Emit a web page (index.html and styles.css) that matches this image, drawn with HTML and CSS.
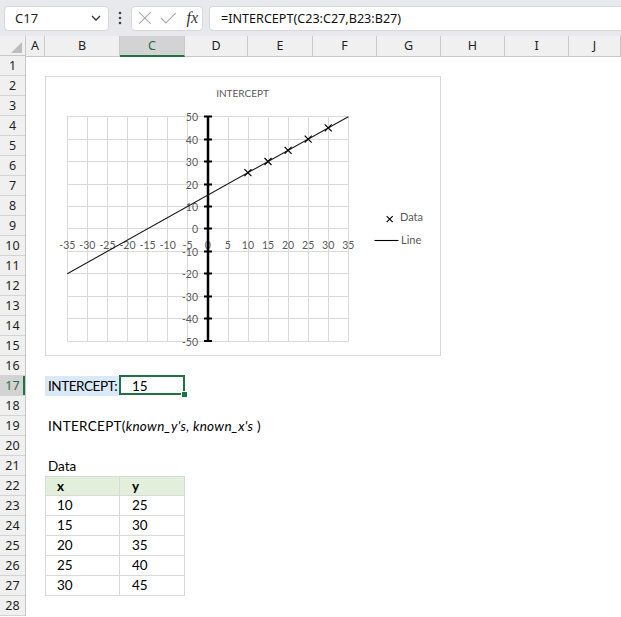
FILE: index.html
```html
<!DOCTYPE html>
<html>
<head>
<meta charset="utf-8">
<link rel="stylesheet" href="styles.css">
</head>
<body>
<div class="topbar">
  <div class="namebox">
    <span>C17</span>
    <svg class="chev" width="10" height="6" viewBox="0 0 10 6"><polyline points="1,1 5,5 9,1" fill="none" stroke="#333" stroke-width="1.3"/></svg>
  </div>
  <div class="dots">
    <svg width="4" height="14" viewBox="0 0 4 14"><circle cx="2" cy="2" r="1.3" fill="#444"/><circle cx="2" cy="7" r="1.3" fill="#444"/><circle cx="2" cy="12" r="1.3" fill="#444"/></svg>
  </div>
  <div class="fxbox">
    <svg width="14" height="14" viewBox="0 0 14 14"><path d="M1 1 L13 13 M13 1 L1 13" stroke="#a8a8a8" stroke-width="1.1" fill="none"/></svg>
    <svg width="17" height="12" viewBox="0 0 17 12"><polyline points="1,6 6,11 16,1" stroke="#a8a8a8" stroke-width="1.1" fill="none"/></svg>
    <span class="fx">fx</span>
  </div>
  <div class="formula">=INTERCEPT(C23:C27,B23:B27)</div>
</div>

<div class="sheet">
  <div class="corner">
    <svg width="26" height="20" viewBox="0 0 26 20"><polygon points="22,6 22,17 11,17" fill="#bdbdbd"/></svg>
  </div>
  <div class="colheads">
    <div class="ch">A</div>
    <div class="ch">B</div>
    <div class="ch sel">C</div>
    <div class="ch">D</div>
    <div class="ch">E</div>
    <div class="ch">F</div>
    <div class="ch">G</div>
    <div class="ch">H</div>
    <div class="ch">I</div>
    <div class="ch">J</div>
  </div>
  <div class="rowheads">
    <div class="rh">1</div><div class="rh">2</div><div class="rh">3</div><div class="rh">4</div>
    <div class="rh">5</div><div class="rh">6</div><div class="rh">7</div><div class="rh">8</div>
    <div class="rh">9</div><div class="rh">10</div><div class="rh">11</div><div class="rh">12</div>
    <div class="rh">13</div><div class="rh">14</div><div class="rh">15</div><div class="rh">16</div>
    <div class="rh sel">17</div><div class="rh">18</div><div class="rh">19</div><div class="rh">20</div>
    <div class="rh">21</div><div class="rh">22</div><div class="rh">23</div><div class="rh">24</div>
    <div class="rh">25</div><div class="rh">26</div><div class="rh">27</div><div class="rh">28</div>
  </div>
  <div class="cells">
    <div class="chart">
      <svg width="396" height="280" viewBox="45 76 396 280">
        <rect x="45.5" y="76.5" width="395" height="279" fill="#fff" stroke="#d9d9d9"/>
        <text class="title" x="242.5" y="97" text-anchor="middle">INTERCEPT</text>
        <path d="M67.5 116V342M87.5 116V342M107.5 116V342M127.5 116V342M147.5 116V342M167.5 116V342M187.5 116V342M228.5 116V342M248.5 116V342M268.5 116V342M288.5 116V342M308.5 116V342M328.5 116V342M348.5 116V342M67 116.5H349M67 139.5H349M67 161.5H349M67 184.5H349M67 206.5H349M67 228.5H349M67 251.5H349M67 273.5H349M67 296.5H349M67 318.5H349M67 341.5H349" stroke="#d9d9d9" stroke-width="1" fill="none"/>
        <g class="xl" text-anchor="middle">
          <text x="67.3" y="249">-35</text><text x="87.4" y="249">-30</text><text x="107.5" y="249">-25</text>
          <text x="127.5" y="249">-20</text><text x="147.6" y="249">-15</text><text x="167.7" y="249">-10</text>
          <text x="187.7" y="249">-5</text><text x="207.8" y="249">0</text><text x="227.9" y="249">5</text>
          <text x="247.9" y="249">10</text><text x="268" y="249">15</text><text x="288.1" y="249">20</text>
          <text x="308.2" y="249">25</text><text x="328.2" y="249">30</text><text x="348.3" y="249">35</text>
        </g>
        <g class="xl" text-anchor="end">
          <text x="198" y="120.5">50</text><text x="198" y="143.5">40</text><text x="198" y="165.5">30</text>
          <text x="198" y="188.5">20</text><text x="198" y="210.5">10</text><text x="198" y="232.5">0</text>
          <text x="198" y="256">-10</text><text x="198" y="277.5">-20</text><text x="198" y="300.5">-30</text>
          <text x="198" y="322.5">-40</text><text x="198" y="345.5">-50</text>
        </g>
        <path d="M208 116V342" stroke="#000" stroke-width="2.5"/>
        <path d="M204 116.5H212M204 139.5H212M204 161.5H212M204 184.5H212M204 206.5H212M204 228.5H212M204 251.5H212M204 273.5H212M204 296.5H212M204 318.5H212M204 341H212" stroke="#000" stroke-width="2"/>
        <path d="M67.3 273.7L348.3 116.65" stroke="#1a1a1a" stroke-width="1.1" fill="none"/>
        <path d="M244.4 169.2l7 7m0 -7l-7 7M264.5 158l7 7m0 -7l-7 7M284.6 146.8l7 7m0 -7l-7 7M304.7 135.6l7 7m0 -7l-7 7M324.7 124.4l7 7m0 -7l-7 7" stroke="#000" stroke-width="1.2" fill="none"/>
        <path d="M386.7 216.2l6 6m0 -6l-6 6" stroke="#000" stroke-width="1.2" fill="none"/>
        <text class="lg" x="400" y="221">Data</text>
        <path d="M374.5 240.5H398.5" stroke="#000" stroke-width="1.1"/>
        <text class="lg" x="401" y="244">Line</text>
      </svg>
    </div>
    <div class="c b17">INTERCEPT:</div>
    <div class="c c17">15</div>
    <div class="c b19">INTERCEPT(<i>known_y's, known_x's</i> )</div>
    <div class="c b21">Data</div>
    <div class="table">
      <div class="t th tb">x</div><div class="t th tc">y</div>
      <div class="t tb">10</div><div class="t tc">25</div>
      <div class="t tb">15</div><div class="t tc">30</div>
      <div class="t tb">20</div><div class="t tc">35</div>
      <div class="t tb">25</div><div class="t tc">40</div>
      <div class="t tb">30</div><div class="t tc">45</div>
    </div>
  </div>
</div>
</body>
</html>
```

FILE: styles.css
```css
* { box-sizing: border-box; margin: 0; padding: 0; }
body {
  width: 621px;
  height: 617px;
  overflow: hidden;
  background: #fff;
  font-family: "Noto Sans", "Open Sans", sans-serif;
  color: #222;
}
.topbar {
  height: 36px;
  background: #e7e9ec;
  display: flex;
  align-items: center;
  padding-left: 4px;
}
.namebox {
  width: 105px;
  height: 25px;
  background: #fff;
  border: 1px solid #d6d8dc;
  border-radius: 4px;
  display: flex;
  align-items: center;
  justify-content: space-between;
  padding: 0 7px 0 10px;
  font-size: 13px;
  color: #222;
}
.dots {
  width: 22px;
  display: flex;
  justify-content: center;
  align-items: center;
}
.dots svg { display: block; }
.fxbox {
  width: 72px;
  height: 25px;
  background: #fff;
  border: 1px solid #d6d8dc;
  border-radius: 4px;
  display: flex;
  align-items: center;
  padding: 0 4px 0 6px;
  gap: 8px;
}
.fxbox svg { display: block; }
.fx {
  font-family: "Liberation Serif", serif;
  font-style: italic;
  font-size: 16px;
  color: #333;
  margin-left: 2px;
}
.formula {
  flex: 1;
  height: 25px;
  margin-left: 6px;
  background: #fff;
  border: 1px solid #d6d8dc;
  border-right: none;
  border-radius: 4px 0 0 4px;
  padding-left: 11px;
  font-size: 12.6px;
  display: flex;
  align-items: center;
  color: #111;
}
.sheet {
  display: grid;
  grid-template-columns: 26px 1fr;
  grid-template-rows: 20px 560px;
}
.corner {
  background: #f0f0f0;
  border-right: 1px solid #c8c8c8;
  border-bottom: 1px solid #c8c8c8;
}
.corner svg { display: block; }
.colheads {
  display: grid;
  grid-template-columns: 19px 75px 65px 63px 65px 64px 64px 64px 64px 1fr;
  background: #f0f0f0;
}
.ch {
  border-right: 1px solid #c8c8c8;
  border-bottom: 1px solid #c8c8c8;
  text-align: center;
  font-size: 12.5px;
  line-height: 19px;
  color: #1f1f1f;
}
.ch.sel {
  background: #d3d3d3;
  color: #1f6e43;
  border-bottom: 2px solid #1f7244;
}
.rowheads {
  display: flex;
  flex-direction: column;
  background: #f0f0f0;
  border-right: 1px solid #c8c8c8;
}
.rh {
  height: 20px;
  flex: none;
  border-bottom: 1px solid #d4d4d4;
  text-align: center;
  font-size: 12.5px;
  line-height: 20px;
  color: #1f1f1f;
}
.rh.sel {
  background: #d3d3d3;
  color: #1f6e43;
  box-shadow: inset -2px 0 0 #1f7244;
}
.cells {
  display: grid;
  grid-template-columns: 19px 75px 65px 63px 65px 64px 64px 64px 64px 1fr;
  grid-template-rows: repeat(28, 20px);
  font-family: "Lato", "Liberation Sans", sans-serif;
  font-size: 13.5px;
  color: #000;
}
.c {
  padding-left: 3px;
  line-height: 20px;
  white-space: nowrap;
}
.chart { grid-column: 2 / 8; grid-row: 2 / 16; }
.chart svg { display: block; }
.title { font-family: "Lato", sans-serif; font-size: 10px; fill: #595959; }
.xl { font-family: "Lato", sans-serif; font-size: 10.5px; fill: #595959; }
.lg { font-family: "Lato", sans-serif; font-size: 11px; fill: #595959; }
.b17 { grid-column: 2; grid-row: 17; background: #dae9f8; letter-spacing: -0.45px; }
.c17 { grid-column: 3; grid-row: 17; position: relative; padding-left: 12px; }
.c17::before {
  content: "";
  position: absolute;
  left: -1px;
  top: -1px;
  right: 0;
  bottom: 1px;
  border: 2px solid #1f7244;
}
.c17::after {
  content: "";
  position: absolute;
  right: -2px;
  bottom: -1px;
  width: 5px;
  height: 5px;
  background: #1f7244;
  border-left: 1px solid #fff;
  border-top: 1px solid #fff;
  box-sizing: content-box;
}
.b19 { grid-column: 2 / 8; grid-row: 19; letter-spacing: 0.3px; }
.b21 { grid-column: 2; grid-row: 21; }
.table {
  grid-column: 2 / 4;
  grid-row: 22 / 28;
  display: grid;
  grid-template-columns: 74px 65px;
  grid-template-rows: 19px repeat(5, 20px);
  border-top: 1px solid #d9d9d9;
  border-left: 1px solid #d9d9d9;
}
.t {
  border-right: 1px solid #d9d9d9;
  border-bottom: 1px solid #d9d9d9;
  line-height: 19px;
  white-space: nowrap;
}
.th { background: #e2efda; font-weight: bold; line-height: 18px; }
.tb { padding-left: 11px; }
.tc { padding-left: 12px; }
```
